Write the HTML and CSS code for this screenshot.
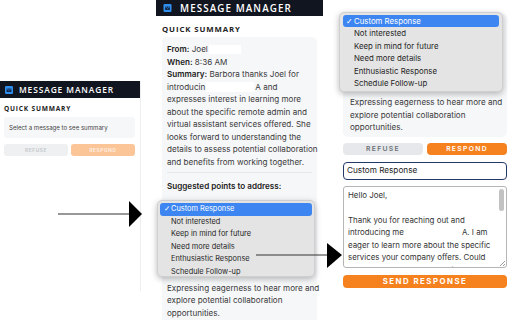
FILE: index.html
```html
<!DOCTYPE html>
<html lang="en">
<head>
  <meta charset="UTF-8" />
  <meta name="viewport" content="width=device-width, initial-scale=1" />
  <title>Message Manager - flow</title>
  <link rel="stylesheet" href="styles.css">
</head>
<body>

  <div class="canvas">

    <!-- step 1: empty state -->
    <section class="panel panel-a">
      <header class="bar">
        <svg class="bar-icon" viewBox="0 0 10 10"><rect width="10" height="10" rx="1.5" fill="#2f8ff0"/><path d="M2 3.2h6v4.2H2z" fill="#10223f"/><path d="M2 3.2l3 2.3 3-2.3" fill="none" stroke="#2f8ff0" stroke-width="0.9"/></svg>
        <span class="bar-title">MESSAGE MANAGER</span>
      </header>
      <div class="panel-body">
        <h2 class="label">QUICK SUMMARY</h2>
        <div class="empty">Select a message to see summary</div>
        <div class="actions">
          <button class="btn btn-refuse">REFUSE</button>
          <button class="btn btn-respond">RESPOND</button>
        </div>
      </div>
    </section>

    <!-- step 2: summary + suggestions -->
    <section class="panel panel-b">
      <header class="bar">
        <svg class="bar-icon" viewBox="0 0 10 10"><rect width="10" height="10" rx="1.5" fill="#2f8ff0"/><path d="M2 3.2h6v4.2H2z" fill="#10223f"/><path d="M2 3.2l3 2.3 3-2.3" fill="none" stroke="#2f8ff0" stroke-width="0.9"/></svg>
        <span class="bar-title">MESSAGE MANAGER</span>
      </header>
      <div class="panel-body">
        <h2 class="label">QUICK SUMMARY</h2>
        <div class="card">
          <p><b>From:</b> Joel<span class="redact r-name"></span><br>
          <b>When:</b> 8:36 AM<br>
          <b>Summary:</b> Barbora thanks Joel for<br>
          introducin<span class="redact r-intro"></span>A and<br>
          expresses interest in learning more<br>
          about the specific remote admin and<br>
          virtual assistant services offered. She<br>
          looks forward to understanding the<br>
          details to assess potential collaboration<br>
          and benefits from working together.</p>
          <hr class="divider">
          <p class="points-title">Suggested points to address:</p>
          <div class="choice"></div>
          <p class="reason">Expressing eagerness to hear more and<br>
          explore potential collaboration<br>
          opportunities.</p>
        </div>
      </div>
      <ul class="menu menu-b">
        <li class="on"><span class="tick">✓</span>Custom Response</li>
        <li>Not interested</li>
        <li>Keep in mind for future</li>
        <li>Need more details</li>
        <li>Enthusiastic Response</li>
        <li>Schedule Follow-up</li>
      </ul>
    </section>

    <!-- step 3: compose -->
    <section class="panel panel-c">
      <div class="card card-c">
        <div class="choice"></div>
        <p class="reason">Expressing eagerness to hear more and<br>
        explore potential collaboration<br>
        opportunities.</p>
      </div>
      <div class="actions">
        <button class="btn btn-refuse">REFUSE</button>
        <button class="btn btn-respond">RESPOND</button>
      </div>
      <div class="field">Custom Response</div>
      <div class="reply">
        <p>Hello Joel,<br>
        <br>
        Thank you for reaching out and<br>
        introducing me<span class="gap"></span>A. I am<br>
        eager to learn more about the specific<br>
        services your company offers. Could<br>
        you please share more details on</p>
        <span class="thumb"></span>
        <span class="grip"></span>
      </div>
      <button class="send">SEND RESPONSE</button>
      <ul class="menu menu-c">
        <li class="on"><span class="tick">✓</span>Custom Response</li>
        <li>Not interested</li>
        <li>Keep in mind for future</li>
        <li>Need more details</li>
        <li>Enthusiastic Response</li>
        <li>Schedule Follow-up</li>
      </ul>
    </section>

    <svg class="arrow arrow-1" viewBox="0 0 88 30" width="88" height="30">
      <line x1="2" y1="15" x2="74" y2="15" stroke="#333" stroke-width="1.2"/>
      <polygon points="73,2 86,15 73,28" fill="#000"/>
    </svg>
    <svg class="arrow arrow-2" viewBox="0 0 90 30" width="90" height="30">
      <line x1="2" y1="14" x2="75" y2="14" stroke="#333" stroke-width="1.2"/>
      <polygon points="73,2 88,14 73,27" fill="#000"/>
    </svg>

  </div>

</body>
</html>
```

FILE: styles.css
```css
* { box-sizing: border-box; margin: 0; padding: 0; }
body {
  background: #fff;
  font-family: Inter, 'Liberation Sans', sans-serif;
  color: #333;
}

.canvas {
  position: relative;
  width: 512px;
  height: 320px;
  overflow: hidden;
}

.panel {
  position: absolute;
  background: #fff;
}

/* header */
.bar {
  display: flex;
  align-items: center;
  background: #11151f;
  color: #fff;
}

.bar-title {
  font-family: 'Open Sans', sans-serif;
  font-weight: 600;
  white-space: nowrap;
}

.label {
  font-family: 'Open Sans', sans-serif;
  font-weight: 700;
  color: #222;
  white-space: nowrap;
}

.actions {
  display: flex;
}

.btn {
  flex: 1;
  border: none;
  font-family: Inter, 'Liberation Sans', sans-serif;
  font-weight: 600;
}

/* panel A: empty state, small */
.panel-a {
  left: 0;
  top: 81px;
  width: 141px;
  height: 210px;
  border-right: 1px solid #eeeff1;
}

.panel-a .bar {
  height: 17px;
  gap: 6px;
  padding-left: 5px;
}

.panel-a .bar-icon { width: 8px; height: 8px; }
.panel-a .bar-title { font-size: 8.4px; letter-spacing: 0.9px; }

.panel-a .panel-body { padding: 0 5px 0 4px; }

.panel-a .label {
  margin-top: 7px;
  font-size: 6.6px;
  line-height: 8px;
  letter-spacing: 0.8px;
}

.empty {
  margin-top: 4px;
  height: 21px;
  line-height: 21px;
  padding-left: 5px;
  background: #f6f7f9;
  border-radius: 3px;
  font-size: 6.1px;
  color: #444;
}

.panel-a .actions { margin-top: 6px; gap: 3px; }

.panel-a .btn {
  height: 12px;
  border-radius: 3px;
  font-size: 4.8px;
  letter-spacing: 0.6px;
}

.panel-a .btn-refuse { background: #eef0f2; color: #c3c6ca; }
.panel-a .btn-respond { background: #fcc597; color: #fef3ea; }

/* panel B: summary */
.panel-b {
  left: 156px;
  top: 0;
  width: 167px;
  height: 320px;
}

.panel-b .bar {
  height: 16px;
  gap: 8px;
  padding-left: 7px;
}

.panel-b .bar-icon { width: 9px; height: 8px; }
.panel-b .bar-title { font-size: 9.8px; letter-spacing: 1.1px; }

.panel-b .panel-body { padding: 0 6px; }

.panel-b .label {
  margin-top: 8px;
  font-size: 7.8px;
  line-height: 10px;
  letter-spacing: 0.9px;
}

.card {
  margin-top: 3px;
  padding: 6px 5px 8px;
  background: #f6f7f9;
  border-radius: 5px;
  font-size: 8.1px;
  line-height: 12.5px;
  color: #3a3a3a;
  white-space: nowrap;
}

.card b { color: #222; font-weight: 600; }

.redact {
  display: inline-block;
  background: #fff;
  vertical-align: middle;
}

.r-name { width: 32px; height: 9px; margin-left: 1px; }
.r-intro { width: 48px; height: 10px; margin: 0 1px; }

.divider {
  border: none;
  border-top: 1px solid #e6e7ea;
  margin: 4px 0 7px;
}

.points-title {
  font-weight: 600;
  color: #222;
}

.choice {
  height: 13px;
  margin: 3px 0 73px;
}

/* native select popup */
.menu {
  position: absolute;
  list-style: none;
  background: #e4e4e4;
  border: 1px solid #cfcfcf;
  border-radius: 5px;
  box-shadow: 0 2px 6px rgba(0,0,0,0.28);
  color: #262626;
  white-space: nowrap;
}

.menu li { padding-left: 11px; border-radius: 3px; }

.menu li.on {
  background: #3d86f2;
  color: #fff;
  padding-left: 4px;
}

.tick { display: inline-block; width: 7px; font-family: 'DejaVu Sans', sans-serif; }

.menu-b {
  left: 1px;
  top: 200px;
  width: 158px;
  height: 77px;
  padding: 2px 2px;
  font-size: 7.4px;
}

.menu-b li { height: 12.6px; line-height: 12.6px; }

/* panel C: compose */
.panel-c {
  left: 343px;
  top: 0;
  width: 164px;
  height: 320px;
  padding-top: 14px;
}

.card-c {
  margin-top: 0;
  padding: 4px 7px 3px;
  background: #f6f7f9;
}

.card-c .choice { height: 12px; margin: 0 0 66px; }

.panel-c .actions { margin-top: 6px; gap: 4px; }

.panel-c .btn {
  height: 12px;
  border-radius: 4px;
  font-size: 6.8px;
  letter-spacing: 1.3px;
}

.panel-c .btn-refuse { background: #e6e8eb; color: #6b7078; }
.panel-c .btn-respond { background: #f5821f; color: #fff; }

.field {
  margin-top: 7px;
  height: 18px;
  padding-left: 3px;
  border: 1.5px solid #25386a;
  border-radius: 4px;
  font-size: 8.2px;
  line-height: 15px;
  color: #222;
}

.reply {
  position: relative;
  margin-top: 6px;
  height: 82px;
  padding: 2px 10px 0 4px;
  border: 1px solid #b5b5b5;
  border-radius: 3px;
  overflow: hidden;
  font-size: 7.9px;
  line-height: 12.5px;
  color: #333;
  white-space: nowrap;
}

.gap { display: inline-block; width: 58px; }

.thumb {
  position: absolute;
  right: 2px;
  top: 2px;
  width: 5px;
  height: 22px;
  background: #c2c2c2;
  border-radius: 3px;
}

.grip {
  position: absolute;
  right: 1px;
  bottom: 1px;
  width: 5px;
  height: 5px;
  background: linear-gradient(135deg, transparent 45%, #999 45%, #999 55%, transparent 55%, transparent 75%, #999 75%, #999 85%, transparent 85%);
}

.send {
  display: block;
  width: 100%;
  margin-top: 7px;
  height: 13px;
  border: none;
  border-radius: 4px;
  background: #f5821f;
  color: #fff;
  font-family: Inter, 'Liberation Sans', sans-serif;
  font-weight: 700;
  font-size: 7.8px;
  letter-spacing: 1.5px;
}

.menu-c {
  left: -4px;
  top: 12px;
  width: 164px;
  height: 80px;
  padding: 2px 3px;
  font-size: 7.8px;
}

.menu-c li { height: 12.4px; line-height: 12.4px; }
.menu-c li { padding-left: 11px; }
.menu-c li.on { padding-left: 3px; }
.menu-c .tick { width: 8px; }

/* arrows between the steps */
.arrow { position: absolute; }
.arrow-1 { left: 56px; top: 199px; }
.arrow-2 { left: 254px; top: 241px; }
```
